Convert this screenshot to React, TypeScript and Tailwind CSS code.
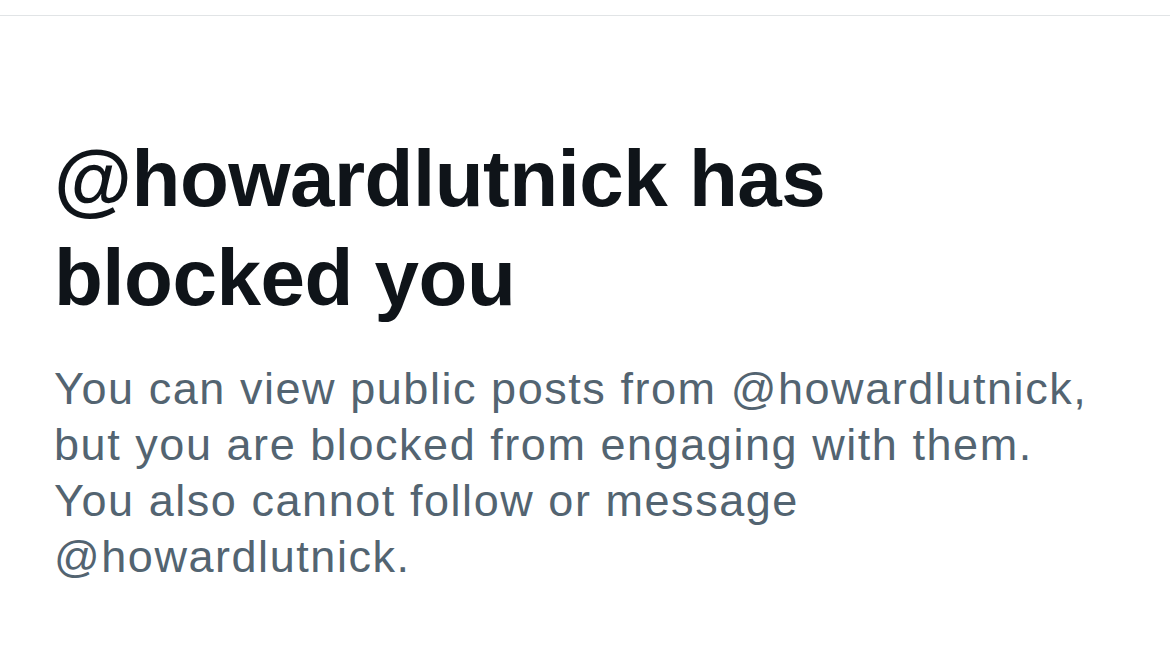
export default function App() {
  return (
    <div className="w-[1170px] h-[662px] bg-white overflow-hidden" style={{ fontFamily: '"Liberation Sans", Arial, sans-serif' }}>
      <div className="h-[15px]" />
      <div className="border-t border-[#e1e4e6] pt-[113px] pl-[54px] pr-4">
        <h1 className="text-[80px] leading-[99px] font-bold text-[#0f1419] tracking-[-0.5px]">
          @howardlutnick has
          <br />
          blocked you
        </h1>
        <p className="mt-[34px] text-[45px] leading-[56px] text-[#536471] tracking-[1.55px]">
          You can view public posts from @howardlutnick,
          <br />
          but you are blocked from engaging with them.
          <br />
          You also cannot follow or message
          <br />
          @howardlutnick.
        </p>
      </div>
    </div>
  );
}
